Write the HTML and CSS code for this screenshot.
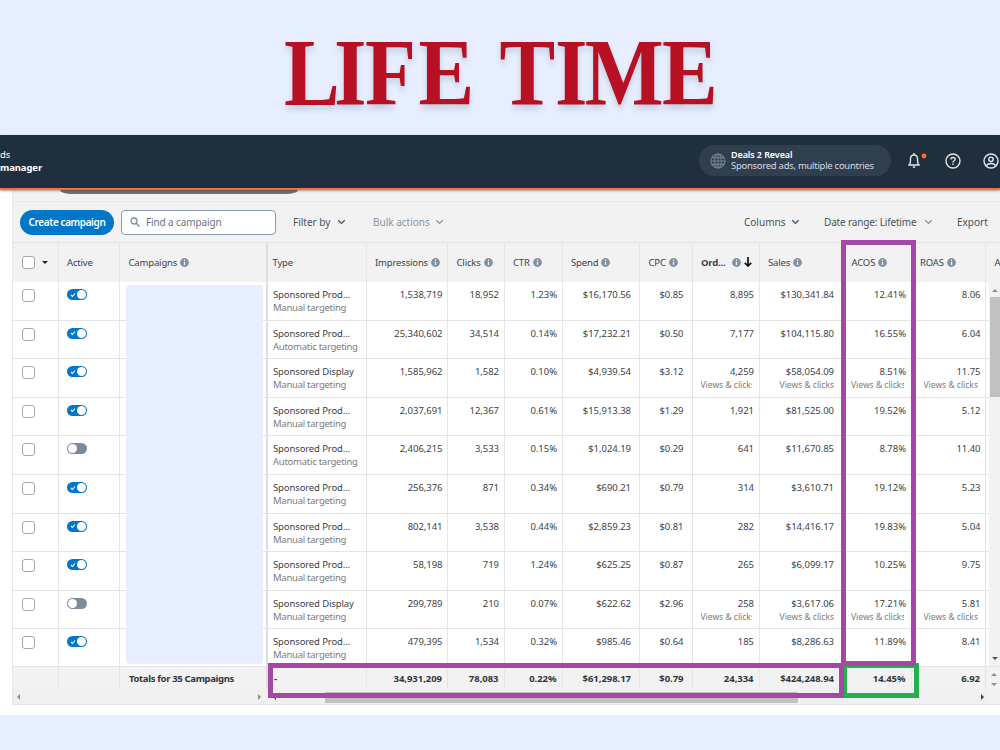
FILE: index.html
```html
<!DOCTYPE html>
<html lang="en">
<head>
    <meta charset="UTF-8">
    <meta name="viewport" content="width=device-width, initial-scale=1.0">
    <title>Campaign manager</title>
    <link rel="stylesheet" href="styles.css">
</head>
<body>
    <svg width="0" height="0" class="defs">
        <symbol id="info" viewBox="0 0 9 9">
            <circle cx="4.5" cy="4.5" r="4.4" fill="#8191a3"/>
            <path d="M4.5 1.6v1.2M4.5 3.7v3.3" stroke="#f2f2f2" stroke-width="1.3"/>
        </symbol>
        <symbol id="chevron" viewBox="0 0 9 6">
            <path d="M1.3 1.2l3.2 3.2 3.2-3.2" fill="none" stroke="currentColor" stroke-width="1.3"/>
        </symbol>
    </svg>

    <h1 class="title">
        <svg width="1000" height="135">
            <text class="title-text" transform="scale(.87 1)" x="326.5 384 419.500 481 545 574 638 672 761" y="105.5">LIFE TIME</text>
        </svg>
    </h1>

    <header class="nav">
        <div class="brand"><span>ds</span><b>manager</b></div>
        <div class="account">
            <svg class="globe" viewBox="0 0 16 16" fill="none" stroke="#73818f" stroke-width="1.1">
                <circle cx="8" cy="8" r="7"/>
                <ellipse cx="8" cy="8" rx="3.4" ry="7"/>
                <path d="M8 1v14M1 8h14M2 4.6h12M2 11.4h12"/>
            </svg>
            <div class="account-text"><b>Deals 2 Reveal</b><span>Sponsored ads, multiple countries</span></div>
        </div>
        <svg class="bell" viewBox="0 0 20 18" fill="none" stroke="#e3e6e9" stroke-width="1.4">
            <path d="M1.2 13h11.6M2.7 12.5c.8-1.3.8-3 .8-5.5C3.5 4.5 4.8 3 7 3s3.5 1.5 3.5 4c0 2.5 0 4.2.8 5.5M7 1v2M5.8 15h2.4"/>
            <circle cx="17" cy="4" r="2.4" fill="#ff6d1f" stroke="none"/>
        </svg>
        <svg class="help" viewBox="0 0 16 16" fill="none" stroke="#e3e6e9" stroke-width="1.4">
            <circle cx="8" cy="8" r="7"/>
            <path d="M5.9 6.5c0-2.8 4.3-2.6 4.3-.2C10.2 7.8 8 7.7 8 9.5M8 10.6v1.5"/>
        </svg>
        <svg class="user" viewBox="0 0 16 16" fill="none" stroke="#e3e6e9" stroke-width="1.4">
            <circle cx="8" cy="8" r="7"/>
            <circle cx="8" cy="6.3" r="2.2"/>
            <path d="M3.7 13c.6-3.3 8-3.3 8.6 0"/>
        </svg>
    </header>

    <main class="page">
        <div class="panel">
            <div class="strip"><div class="pill"></div></div>
            <div class="toolbar">
                <button class="create">Create campaign</button>
                <div class="search">
                    <svg viewBox="0 0 10 10" fill="none" stroke="#7b8a99" stroke-width="1.3"><circle cx="4" cy="4" r="3"/><path d="M6.2 6.2l3.3 3.3"/></svg>
                    <span>Find a campaign</span>
                </div>
                <div class="menu filter">Filter by <svg><use href="#chevron"/></svg></div>
                <div class="menu bulk">Bulk actions <svg><use href="#chevron"/></svg></div>
                <div class="menu columns">Columns <svg><use href="#chevron"/></svg></div>
                <div class="menu range">Date range: Lifetime <svg><use href="#chevron"/></svg></div>
                <div class="menu export">Export</div>
            </div>

            <div class="row head">
                <div class="check"><i class="box"></i><i class="caret"></i></div>
                <div>Active</div>
                <div>Campaigns <svg><use href="#info"/></svg></div>
                <div>Type</div>
                <div>Impressions <svg><use href="#info"/></svg></div>
                <div>Clicks <svg><use href="#info"/></svg></div>
                <div>CTR <svg><use href="#info"/></svg></div>
                <div>Spend <svg><use href="#info"/></svg></div>
                <div>CPC <svg><use href="#info"/></svg></div>
                <div class="sorted"><b>Ord...</b> <svg><use href="#info"/></svg><svg class="down" viewBox="0 0 8 10"><path d="M4 0v9M.8 5.8L4 9l3.2-3.2" fill="none" stroke="#111" stroke-width="1.7"/></svg></div>
                <div>Sales <svg><use href="#info"/></svg></div>
                <div>ACOS <svg><use href="#info"/></svg></div>
                <div>ROAS <svg><use href="#info"/></svg></div>
                <div class="more">A</div>
            </div>

            <div class="body">
                <div class="rows" id="rows"></div>
                <div class="vbar"><i class="up"></i><i class="thumb"></i><i class="dn"></i></div>
                <div class="cover"></div>
            </div>

            <div class="row totals">
                <div></div>
                <div></div>
                <div class="label">Totals for 35 Campaigns</div>
                <div class="type">-</div>
                <div>34,931,209</div>
                <div>78,083</div>
                <div>0.22%</div>
                <div>$61,298.17</div>
                <div>$0.79</div>
                <div>24,334</div>
                <div>$424,248.94</div>
                <div>14.45%</div>
                <div>6.92</div>
                <div class="spin"><i class="up"></i><i class="dn"></i></div>
            </div>
            <div class="hbars">
                <div class="hbar left"><i class="lt"></i><i class="rt"></i></div>
                <div class="hbar right"><i class="lt"></i><i class="thumb"></i><i class="rt"></i></div>
            </div>
        </div>
    </main>

    <!-- highlight frames over the table -->
    <div class="mark mark-green"></div>
    <div class="mark mark-totals"></div>
    <div class="mark mark-acos"></div>

    <script>
        // on, type, targeting, impressions, clicks, CTR, spend, CPC, orders, sales, ACOS, ROAS
        const campaigns = [
            [1, 'Prod...', 'Manual', '1,538,719', '18,952', '1.23%', '$16,170.56', '$0.85', '8,895', '$130,341.84', '12.41%', '8.06'],
            [1, 'Prod...', 'Automatic', '25,340,602', '34,514', '0.14%', '$17,232.21', '$0.50', '7,177', '$104,115.80', '16.55%', '6.04'],
            [1, 'Display', 'Manual', '1,585,962', '1,582', '0.10%', '$4,939.54', '$3.12', '4,259', '$58,054.09', '8.51%', '11.75'],
            [1, 'Prod...', 'Manual', '2,037,691', '12,367', '0.61%', '$15,913.38', '$1.29', '1,921', '$81,525.00', '19.52%', '5.12'],
            [0, 'Prod...', 'Automatic', '2,406,215', '3,533', '0.15%', '$1,024.19', '$0.29', '641', '$11,670.85', '8.78%', '11.40'],
            [1, 'Prod...', 'Manual', '256,376', '871', '0.34%', '$690.21', '$0.79', '314', '$3,610.71', '19.12%', '5.23'],
            [1, 'Prod...', 'Manual', '802,141', '3,538', '0.44%', '$2,859.23', '$0.81', '282', '$14,416.17', '19.83%', '5.04'],
            [1, 'Prod...', 'Manual', '58,198', '719', '1.24%', '$625.25', '$0.87', '265', '$6,099.17', '10.25%', '9.75'],
            [0, 'Display', 'Manual', '299,789', '210', '0.07%', '$622.62', '$2.96', '258', '$3,617.06', '17.21%', '5.81'],
            [1, 'Prod...', 'Manual', '479,395', '1,534', '0.32%', '$985.46', '$0.64', '185', '$8,286.63', '11.89%', '8.41']
        ];

        document.getElementById('rows').innerHTML = campaigns.map(c => {
            const cells = c.slice(3).map((value, i) => {
                // display campaigns count views as well as clicks
                const sub = c[1] === 'Display' && i > 4 ? '<small>Views &amp; clicks</small>' : '';
                return `<div>${value}${sub}</div>`;
            }).join('');
            const tick = c[0] ? '<svg viewBox="0 0 6 6"><path d="M1 3l1.4 1.5L5 1.5" fill="none" stroke="#fff" stroke-width="1.1"/></svg>' : '';
            return `<div class="row item">
                <div class="check"><i class="box"></i></div>
                <div class="active"><span class="toggle ${c[0] ? 'on' : ''}">${tick}</span></div>
                <div></div>
                <div class="type">Sponsored ${c[1]}<small>${c[2]} targeting</small></div>
                ${cells}<div></div>
            </div>`;
        }).join('');
    </script>
</body>
</html>
```
FILE: styles.css
```css
* {
    box-sizing: border-box;
}
body {
    margin: 0;
    width: 1000px;
    height: 750px;
    overflow: hidden;
    position: relative;
    background: #e6eeff;
    color: #3b4249;
    font-family: "Noto Sans", "Open Sans", sans-serif;
    font-size: 9.5px;
    line-height: 13px;
}
.defs {
    position: absolute;
}
.title {
    margin: 0;
    height: 135px;
}
.title svg {
    display: block;
}
.title-text {
    font-family: "Liberation Serif", serif;
    font-weight: bold;
    font-size: 96px;
    fill: #b61022;
    filter: drop-shadow(0 4px 3px rgba(60, 80, 110, .22));
}

/* top navigation */
.nav {
    position: relative;
    z-index: 1;
    height: 55px;
    padding-bottom: 2px;
    background: #202f3e;
    border-bottom: 2px solid #fa6f3d;
    box-shadow: 0 1px 2px rgba(80, 50, 40, .45);
    display: flex;
    align-items: center;
    color: #fff;
}
.brand {
    width: 699px;
    line-height: 13px;
}
.brand span, .brand b {
    display: block;
}
.brand b {
    letter-spacing: -.1px;
}
.account {
    width: 192px;
    height: 31px;
    padding-left: 11px;
    border-radius: 16px;
    background: #303f50;
    display: flex;
    align-items: center;
    gap: 5px;
}
.globe {
    width: 16px;
    height: 16px;
}
.account-text {
    padding-bottom: 2px;
    line-height: 11px;
    color: #d5dae0;
    white-space: nowrap;
}
.account-text b, .account-text span {
    display: block;
}
.account-text span {
    letter-spacing: -.28px;
}
.account-text b {
    color: #fff;
    font-size: 9px;
    font-weight: 600;
    letter-spacing: -.1px;
}
.bell {
    width: 20px;
    height: 18px;
    margin-left: 16px;
}
.help {
    width: 16px;
    height: 16px;
    margin-left: 18px;
}
.user {
    width: 16px;
    height: 16px;
    margin-left: 22px;
    flex-shrink: 0;
}

/* panel and toolbar */
.page {
    height: 524.5px;
    background: #fff;
    padding-left: 12px;
}
.panel {
    height: 515px;
    background: #f2f2f2;
    border-left: 1px solid #e8e8e8;
    border-bottom: 1px solid #e4e4e4;
}
.strip {
    height: 12px;
    border-bottom: 1px solid #e8e8e8;
}
.pill {
    width: 238px;
    height: 4px;
    margin-left: 47px;
    background: #68737c;
    border-radius: 0 0 12px 12px / 0 0 4px 4px;
}
.toolbar {
    height: 40px;
    padding-left: 7px;
    display: flex;
    align-items: center;
    font-size: 10px;
    color: #46525e;
}
.create {
    width: 94px;
    height: 25px;
    padding: 0;
    border: 0;
    border-radius: 13px;
    background: #0077c8;
    color: #fff;
    font: 600 10px "Noto Sans", sans-serif;
    letter-spacing: -.4px;
    white-space: nowrap;
}
.search {
    width: 155px;
    height: 25px;
    margin-left: 7px;
    padding-left: 8px;
    border: 1px solid #8a9bad;
    border-radius: 4px;
    background: #fff;
    color: #69737d;
    display: flex;
    align-items: center;
    gap: 6px;
    letter-spacing: -.12px;
}
.search svg {
    width: 10px;
    height: 10px;
}
.menu {
    display: flex;
    align-items: center;
    justify-content: space-between;
    white-space: nowrap;
}
.menu svg {
    width: 9px;
    height: 6px;
}
.filter {
    width: 53px;
    margin-left: 17px;
}
.bulk {
    width: 71px;
    margin-left: 27px;
    color: #8795a3;
}
.columns {
    width: 56px;
    margin-left: 300px;
}
.range {
    width: 109px;
    margin-left: 24px;
    letter-spacing: -.16px;
}
.range svg {
    color: #8795a3;
}
.export {
    margin-left: 24px;
}

/* table */
.row {
    display: grid;
    grid-template-columns: 45.5px 61.5px 148px 98.5px 81.5px 56.5px 58px 77.5px 52.5px 67px 83.5px 68.5px 74.5px 14px;
}
.row > div {
    border-right: 1px solid #e6e6e6;
    white-space: nowrap;
}
.head {
    height: 40px;
    border-top: 1px solid #e4e4e4;
    align-items: stretch;
    letter-spacing: -.16px;
}
.head > div {
    display: flex;
    align-items: center;
    gap: 3px;
    padding: 0 0 1px 8.5px;
}
.head > div:nth-child(4) {
    padding-left: 4.5px;
}
.head svg {
    width: 9px;
    height: 9px;
}
.head .check {
    gap: 7px;
    padding: 0 0 0 9px;
}
.head .sorted svg {
    margin-left: 3px;
}
.head .sorted .down {
    width: 8px;
    height: 10px;
    margin-left: 0;
}
.row > div:nth-child(3) {
    border-right: 2px solid #dedede;
}
.row > div:nth-child(14) {
    border-right: 0;
}
.body {
    position: relative;
    height: 384px;
    overflow: hidden;
    background: #fff;
}
.item {
    height: 38.62px;
    border-bottom: 1px solid #e4e4e4;
    padding: 0;
}
.item > div {
    padding: 6px 4.5px 0 8px;
    text-align: right;
    letter-spacing: -.04px;
}
.item > .type {
    padding-left: 5px;
    text-align: left;
    letter-spacing: -.12px;
}
.item > div:nth-child(8), .item > div:nth-child(9), .item > div:nth-child(11),
.totals > div:nth-child(8), .totals > div:nth-child(9), .totals > div:nth-child(11) {
    padding-right: 8px;
}
.item small {
    display: block;
    font-size: 9.5px;
    line-height: 14px;
    letter-spacing: -.26px;
    color: #7b7b7b;
}
.item > div:nth-child(n+10) small {
    font-size: 8.5px;
    letter-spacing: 0;
    overflow: hidden;
    text-align: left;
}
.item > div:nth-child(10) small {
    width: 51px;
}
.item > div:nth-child(11) small {
    text-align: right;
}
.item > div:nth-child(12) small {
    width: 53px;
}
.item > div:nth-child(13) small {
    margin-left: 4px;
}
.box {
    display: block;
    width: 13px;
    height: 13px;
    border: 1px solid #a5a9ae;
    border-radius: 3px;
    background: #fff;
}
.item .check {
    padding: 7px 0 0 9px;
}
.item .active {
    padding: 7px 0 0 8px;
    text-align: left;
}
.toggle {
    display: flex;
    align-items: center;
    justify-content: space-between;
    width: 20px;
    height: 11px;
    padding: 0 1px;
    border-radius: 6px;
    background: #7c8b9c;
}
.toggle::after {
    content: "";
    width: 9px;
    height: 9px;
    border-radius: 50%;
    background: #fff;
}
.toggle.on {
    background: #0077c8;
}
.toggle svg {
    width: 6px;
    height: 6px;
    margin-left: 2px;
}
.cover {
    position: absolute;
    left: 112.5px;
    top: 3px;
    width: 137.5px;
    height: 379px;
    border-radius: 4px;
    background: #e6eeff;
}
.totals {
    height: 23px;
    border-top: 1px solid #e4e4e4;
    font-weight: bold;
    color: #30363c;
    letter-spacing: -.04px;
}
.totals > div {
    padding: 5px 5px 0 8px;
    text-align: right;
}
.totals .type {
    text-align: left;
    padding-left: 6px;
}
.totals .label {
    padding: 5px 0 0 9px;
    text-align: left;
    letter-spacing: -.34px;
}

/* arrows and scrollbars */
.caret, .up, .dn, .lt, .rt {
    display: block;
    width: 0;
    height: 0;
    border: 3px solid transparent;
}
.caret {
    border-top-color: #222;
    margin-top: 3px;
}
.up {
    border-bottom-color: #8f8f8f;
    border-top: 0;
}
.dn {
    border-top-color: #505050;
    border-bottom: 0;
}
.lt {
    border-right-color: #8f8f8f;
    border-left: 0;
}
.rt {
    border-left-color: #8f8f8f;
    border-right: 0;
}
.vbar {
    position: absolute;
    right: 0;
    top: 0;
    width: 11px;
    height: 384px;
    padding: 7px 0 6px;
    background: #f2f2f2;
    display: flex;
    flex-direction: column;
    align-items: center;
}
.vbar .thumb {
    width: 10px;
    height: 100px;
    margin: 5px 0 auto 1px;
    background: #c1c1c1;
}
.totals .spin {
    padding: 6px 0 0 5px;
}
.spin .dn {
    margin-top: 7px;
    border-top-color: #8f8f8f;
}
.hbars {
    display: flex;
    gap: 4px;
    height: 15px;
}
.hbar {
    display: flex;
    align-items: center;
    justify-content: space-between;
    background: #f0f0f0;
}
.hbar.left {
    width: 252px;
    padding: 0 4px;
}
.hbar.right {
    width: 719px;
    padding: 0 4px;
}
.hbar .thumb {
    width: 473px;
    height: 11px;
    margin: 1px auto 0 49px;
    background: #c1c1c1;
}
.hbar.right .lt {
    border-right-color: #404040;
}
.hbar.right .rt {
    border-left-color: #404040;
}

.mark {
    position: absolute;
    z-index: 2;
    border: 5px solid #a349a4;
}
.mark-green {
    left: 842px;
    top: 663px;
    width: 77px;
    height: 35px;
    border-color: #22b14c;
}
.mark-totals {
    left: 268px;
    top: 663px;
    width: 576px;
    height: 35px;
}
.mark-acos {
    left: 841px;
    top: 240px;
    width: 75px;
    height: 426px;
}
```
